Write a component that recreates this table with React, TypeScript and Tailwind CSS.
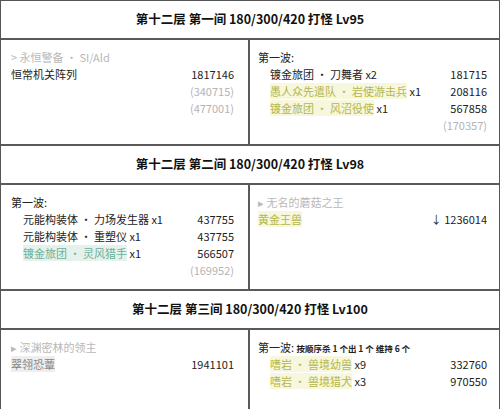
const font = { fontFamily: '"Noto Sans CJK SC", "Noto Sans", sans-serif' }

function Hl({ children, tone }: { children: React.ReactNode; tone: 'y' | 'g' }) {
  return tone === 'y' ? (
    <span className="bg-[#f6f7dc] text-[#b5b64a]">{children}</span>
  ) : (
    <span className="bg-[#e5f2ec] text-[#6cb09a]">{children}</span>
  )
}

function Line({ name, value, indent, sub }: { name: React.ReactNode; value?: string; indent?: boolean; sub?: boolean }) {
  return (
    <div className={`flex h-[17px] items-center justify-between ${indent ? 'pl-3' : ''}`}>
      <span className="whitespace-nowrap">{name}</span>
      {value && <span className={sub ? 'text-[#b4b4b4]' : 'text-[#222]'}>{value}</span>}
    </div>
  )
}

function Header({ text }: { text: string }) {
  return (
    <div className="flex h-[39px] items-center justify-center border-b-2 border-[#5a5a5a] text-[12.5px] font-bold text-[#111]">
      {text}
    </div>
  )
}

function Cell({ children, right }: { children: React.ReactNode; right?: boolean }) {
  return <div className={`pt-[9px] ${right ? 'pl-[8px] pr-[12px]' : 'pl-[10px] pr-[14px] border-r-2 border-[#5a5a5a]'}`}>{children}</div>
}

export default function App() {
  return (
    <div style={font} className="w-[500px] h-[409px] overflow-hidden bg-white text-[11px] text-[#222]">
      <div className="border-x border-t border-[#555]">
        <Header text="第十二层 第一间 180/300/420 打怪 Lv95" />
        <div className="grid grid-cols-[249px_1fr] h-[106px] border-b-2 border-[#5a5a5a]">
          <Cell>
            <Line name={<span className="text-[#b8b8b8]">&gt; 永恒警备 · SI/Ald</span>} />
            <Line name="恒常机关阵列" value="1817146" />
            <Line name="" value="(340715)" sub />
            <Line name="" value="(477001)" sub />
          </Cell>
          <Cell right>
            <Line name="第一波:" />
            <Line indent name="镀金旅团 · 刀舞者 x2" value="181715" />
            <Line indent name={<><Hl tone="y">愚人众先遣队 · 岩使游击兵</Hl> x1</>} value="208116" />
            <Line indent name={<><Hl tone="y">镀金旅团 · 风沼役使</Hl> x1</>} value="567858" />
            <Line name="" value="(170357)" sub />
          </Cell>
        </div>
        <Header text="第十二层 第二间 180/300/420 打怪 Lv98" />
        <div className="grid grid-cols-[249px_1fr] h-[106px] border-b-2 border-[#5a5a5a]">
          <Cell>
            <Line name="第一波:" />
            <Line indent name="元能构装体 · 力场发生器 x1" value="437755" />
            <Line indent name="元能构装体 · 重塑仪 x1" value="437755" />
            <Line indent name={<><Hl tone="g">镀金旅团 · 灵风猎手</Hl> x1</>} value="566507" />
            <Line name="" value="(169952)" sub />
          </Cell>
          <Cell right>
            <Line name={<span className="text-[#b8b8b8]">▸ 无名的蘑菇之王</span>} />
            <Line name={<Hl tone="y">黄金王兽</Hl>} value="↓ 1236014" />
          </Cell>
        </div>
        <Header text="第十二层 第三间 180/300/420 打怪 Lv100" />
        <div className="grid grid-cols-[249px_1fr] h-[80px]">
          <Cell>
            <Line name={<span className="text-[#b8b8b8]">▸ 深渊密林的领主</span>} />
            <Line name={<span className="bg-[#eeeeee] text-[#888]">翠翎恐蕈</span>} value="1941101" />
          </Cell>
          <Cell right>
            <Line name={<>第一波: <span className="text-[8.5px] font-bold">按顺序杀 1 个出 1 个 维持 6 个</span></>} />
            <Line indent name={<><Hl tone="y">嗜岩 · 兽境幼兽</Hl> x9</>} value="332760" />
            <Line indent name={<><Hl tone="y">嗜岩 · 兽境猎犬</Hl> x3</>} value="970550" />
          </Cell>
        </div>
      </div>
    </div>
  )
}
